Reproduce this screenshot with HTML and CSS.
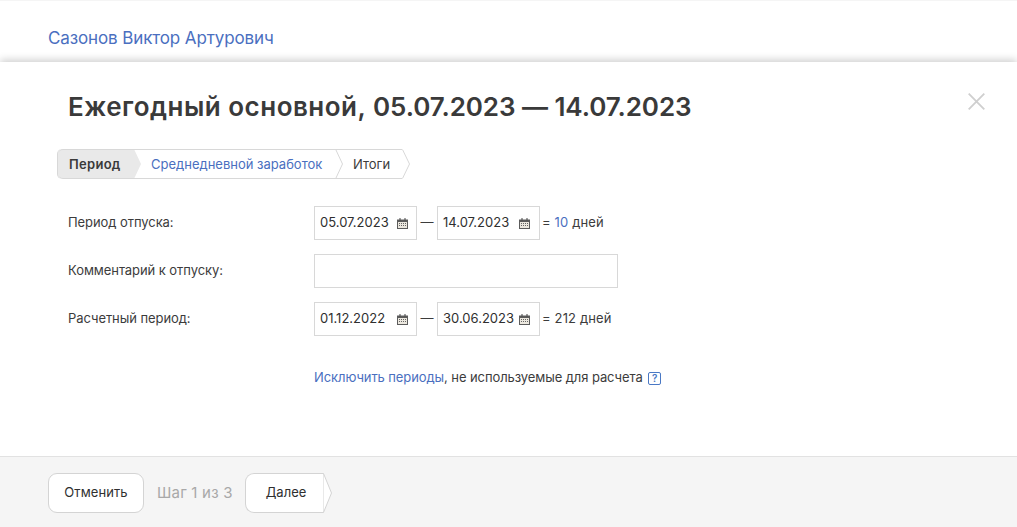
FILE: index.html
```html
<!DOCTYPE html>
<html lang="ru">
<head>
<meta charset="utf-8">
<title>Ежегодный основной</title>
<link rel="stylesheet" href="styles.css">
</head>
<body>
<svg class="defs" width="0" height="0" aria-hidden="true">
  <symbol id="cal" viewBox="0 0 11 11">
    <path d="M0 1.5h11V11H0z" fill="#5c5c5c"/>
    <path d="M1 4h9v6H1z" fill="#ece8df"/>
    <path d="M2.5 0h1v2.5h-1zM7.5 0h1v2.5h-1z" fill="#444"/>
    <path d="M2 5h1v1H2zM4 5h1v1H4zM6 5h1v1H6zM8 5h1v1H8zM2 7h1v1H2zM4 7h1v1H4zM6 7h1v1H6zM8 7h1v1H8z" fill="#666"/>
  </symbol>
</svg>
<header class="top">
  <a class="person">Сазонов Виктор Артурович</a>
</header>
<main class="modal">
  <div class="content">
    <div class="title-row">
      <h1 class="title"><span class="title-name">Ежегодный основной,</span> <span class="title-dates">05.07.2023 — 14.07.2023</span></h1>
      <svg class="close" width="17" height="17" viewBox="0 0 17 17"><path d="M.7.7l15.6 15.6M16.3.7L.7 16.3" stroke="#cfcfcf" stroke-width="1.8" fill="none"/></svg>
    </div>
    <nav class="steps">
      <span class="step step-active">Период</span>
      <svg class="chev" width="8" height="30" viewBox="0 0 8 30"><path d="M0 0l7 15-7 15z" fill="#e9e9e9"/><path d="M0 .5h8M0 29.5h8" stroke="#d8d8d8"/></svg>
      <a class="step step-link">Среднедневной заработок</a>
      <svg class="chev" width="8" height="30" viewBox="0 0 8 30"><path d="M0.5 0l7 15-7 15" fill="none" stroke="#d8d8d8"/><path d="M0 .5h8M0 29.5h8" stroke="#d8d8d8"/></svg>
      <span class="step step-last">Итоги</span>
      <svg class="chev" width="8" height="30" viewBox="0 0 8 30"><path d="M0.5 0.5l7 14.5-7 14.5" fill="#fff" stroke="#d8d8d8"/></svg>
    </nav>
    <div class="form">
      <div class="label">Период отпуска:</div>
      <div class="field">
        <div class="date"><span>05.07.2023</span><svg class="cal" width="11" height="11"><use href="#cal"/></svg></div>
        <span class="dash">—</span>
        <div class="date"><span>14.07.2023</span><svg class="cal" width="11" height="11"><use href="#cal"/></svg></div>
        <span class="total">= <a class="blue">10</a> дней</span>
      </div>
      <div class="label">Комментарий к отпуску:</div>
      <div class="field"><div class="comment"></div></div>
      <div class="label">Расчетный период:</div>
      <div class="field">
        <div class="date"><span>01.12.2022</span><svg class="cal" width="11" height="11"><use href="#cal"/></svg></div>
        <span class="dash">—</span>
        <div class="date"><span>30.06.2023</span><svg class="cal" width="11" height="11"><use href="#cal"/></svg></div>
        <span class="total">= 212 дней</span>
      </div>
    </div>
    <p class="exclude"><a class="blue">Исключить периоды</a>, не используемые для расчета <span class="help">?</span></p>
  </div>
  <footer class="footer">
    <button class="btn">Отменить</button>
    <span class="step-count">Шаг 1 из 3</span>
    <div class="next">
      <span class="next-body">Далее</span>
      <svg width="9" height="40" viewBox="0 0 9 40"><path d="M0 0.5h0.5L8.5 20 .5 39.5H0z" fill="#fff" stroke="#d4d4d4"/></svg>
    </div>
  </footer>
</main>
</body>
</html>
```
FILE: styles.css
```css
* { box-sizing: border-box; }
html, body { margin: 0; height: 100%; }
body {
  font-family: Inter, "Noto Sans", sans-serif;
  font-size: 13px;
  color: #3c3c3c;
  background: #fff;
  overflow: hidden;
  display: flex;
  flex-direction: column;
}
.defs { position: absolute; }
.top {
  height: 62px;
  flex: none;
  padding: 28px 48px 0;
  border-top: 1px solid #f5f5f5;
}
.person { font-size: 17px; line-height: 20px; color: #4a6fc0; display: block; margin-top: -1px; letter-spacing: -.12px; }
.modal {
  flex: 1;
  display: flex;
  flex-direction: column;
  background: #fff;
  box-shadow: 0 -2px 8px rgba(0,0,0,.2);
  position: relative;
}
.content { flex: 1; padding: 0 32px 0 68px; }
.title-row {
  display: flex;
  justify-content: space-between;
  align-items: flex-start;
  padding-top: 29px;
  height: 87px;
}
.title { margin: 0; font-size: 26px; line-height: 32px; font-weight: 600; color: #3a3a3a; }
.title-name { letter-spacing: .5px; }
.title-dates { letter-spacing: -.06px; }
.close { margin-top: 2px; flex: none; }
.steps {
  display: inline-flex;
  height: 30px;
  margin-left: -11px;
  border-left: 1px solid #d8d8d8;
  border-radius: 5px 0 0 5px;
  align-items: stretch;
}
.step {
  display: flex;
  align-items: center;
  border-top: 1px solid #d8d8d8;
  border-bottom: 1px solid #d8d8d8;
  line-height: 1;
}
.step-active { width: 76px; padding-left: 11px; background: #e9e9e9; font-weight: 600; border-radius: 5px 0 0 5px; color: #3a3a3a; letter-spacing: .3px; }
.step-link { width: 193px; padding-left: 9px; color: #4a6fc0; }
.step-last { width: 59px; padding-left: 10px; }
.chev { flex: none; display: block; }
.form {
  display: grid;
  grid-template-columns: 246px 1fr;
  row-gap: 14px;
  margin-top: 27px;
  align-items: center;
}
.label { padding-bottom: 2px; letter-spacing: -.07px; }
.field { display: flex; align-items: center; height: 34px; }
.date {
  width: 103px;
  height: 34px;
  display: flex;
  align-items: center;
  justify-content: space-between;
  padding: 0 8px 2px 5px;
  border: 1px solid #d8d8d8;
  color: #2f2f2f;
}
.dash + .date { padding-right: 9px; }
.cal { display: block; flex: none; margin-top: 2px; }
.dash { width: 20px; text-align: center; padding-bottom: 2px; }
.total { margin-left: 2px; padding-bottom: 2px; letter-spacing: .15px; }
.blue { color: #4a6fc0; }
.comment { width: 304px; height: 34px; border: 1px solid #d8d8d8; }
.exclude { margin: 33px 0 0 246px; line-height: 16px; letter-spacing: -.09px; }
.help {
  display: inline-block;
  width: 13px;
  height: 13px;
  margin-left: 2px;
  border: 1px solid #4a78c4;
  border-radius: 2px;
  color: #4a78c4;
  font-size: 10px;
  font-weight: 600;
  line-height: 11px;
  text-align: center;
  letter-spacing: 0;
}
.footer {
  flex: none;
  height: 71px;
  display: flex;
  align-items: center;
  padding: 2px 48px 0;
  background: #f5f5f5;
  border-top: 1px solid #e2e2e2;
}
.btn {
  width: 96px;
  height: 40px;
  padding: 0 0 2px;
  font: inherit;
  letter-spacing: .1px;
  color: #2f2f2f;
  background: #fff;
  border: 1px solid #d4d4d4;
  border-radius: 9px;
}
.step-count { margin-left: 13px; padding-bottom: 2px; font-size: 15px; letter-spacing: .2px; color: #a8a8a8; width: 88px; }
.next { display: flex; height: 40px; }
.next-body {
  width: 78px;
  display: flex;
  align-items: center;
  justify-content: center;
  padding: 0 0 2px 3px;
  background: #fff;
  border: 1px solid #d4d4d4;
  border-right: 0;
  border-radius: 9px 0 0 9px;
  color: #2f2f2f;
}
```
